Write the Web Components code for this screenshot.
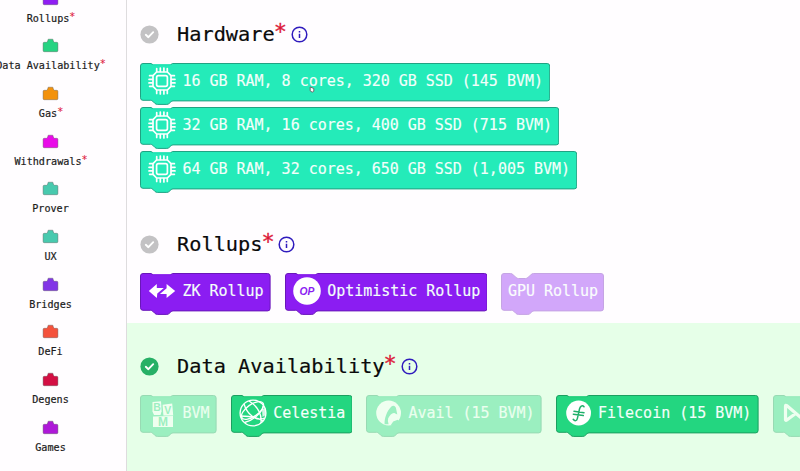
<!DOCTYPE html>
<html lang="en"><head><meta charset="utf-8"><title>Builder</title>
<style>
html,body{margin:0;height:100%;overflow:hidden;background:#fffdff;font-family:"DejaVu Sans Mono","Liberation Mono",monospace}
</style></head><body>
<bvm-app>
 <side-nav slot="nav">
  <nav-item color="#8f1df3" req>Rollups</nav-item>
  <nav-item color="#27d382" req>Data Availability</nav-item>
  <nav-item color="#f3920c" req>Gas</nav-item>
  <nav-item color="#e90be8" req>Withdrawals</nav-item>
  <nav-item color="#48c9ae">Prover</nav-item>
  <nav-item color="#48c9ae">UX</nav-item>
  <nav-item color="#8236e6">Bridges</nav-item>
  <nav-item color="#f4523c">DeFi</nav-item>
  <nav-item color="#d30f43">Degens</nav-item>
  <nav-item color="#ae18d8">Games</nav-item>
 </side-nav>
 <option-group heading="Hardware" style="height:210px" stack>
  <lego-block kind="hw" icon="chip">16 GB RAM, 8 cores, 320 GB SSD (145 BVM)</lego-block>
  <lego-block kind="hw" icon="chip">32 GB RAM, 16 cores, 400 GB SSD (715 BVM)</lego-block>
  <lego-block kind="hw" icon="chip">64 GB RAM, 32 cores, 650 GB SSD (1,005 BVM)</lego-block>
 </option-group>
 <option-group heading="Rollups" style="height:113px">
  <lego-block kind="roll" icon="zk">ZK Rollup</lego-block>
  <lego-block kind="roll" icon="op">Optimistic Rollup</lego-block>
  <lego-block kind="roll" off>GPU Rollup</lego-block>
 </option-group>
 <option-group heading="Data Availability" style="height:148px" done>
  <lego-block kind="da" icon="bvm" off>BVM</lego-block>
  <lego-block kind="da" icon="celestia">Celestia</lego-block>
  <lego-block kind="da" icon="avail" off>Avail (15 BVM)</lego-block>
  <lego-block kind="da" icon="filecoin">Filecoin (15 BVM)</lego-block>
  <lego-block kind="da" icon="near" off></lego-block>
 </option-group>
 <mouse-dot slot="over"></mouse-dot>
</bvm-app>
<script>
const make=(el,html)=>{el.attachShadow({mode:'open'}).innerHTML=html};

customElements.define('bvm-app',class extends HTMLElement{connectedCallback(){make(this,`
<style>:host{display:grid;grid-template-columns:127px 1fr;width:100%;height:471px;position:relative;overflow:hidden}
main{display:flex;flex-direction:column;min-width:0;overflow:hidden}</style>
<slot name="nav"></slot><main><slot></slot></main><slot name="over"></slot>`)}});

customElements.define('side-nav',class extends HTMLElement{connectedCallback(){make(this,`
<style>:host{display:flex;flex-direction:column;box-sizing:border-box;height:471px;border-right:1px solid #dedcde;overflow:hidden}
div{display:flex;flex-direction:column;margin-top:-9.3px;width:101px}</style><div><slot></slot></div>`)}});

customElements.define('nav-item',class extends HTMLElement{connectedCallback(){const c=this.getAttribute('color');make(this,`
<style>:host{display:flex;flex-direction:column;align-items:center;height:47.67px;flex:none;color:#1c1c1c}
svg{display:block;flex:none}
span{display:flex;margin-top:6px;font-size:10.15px;line-height:14px;white-space:pre;-webkit-text-stroke:.2px #1c1c1c}
i{font-style:normal;color:#e0213f;width:5px;position:relative;top:-2px}
i{-webkit-text-stroke:.1px #e0213f}</style>
<svg width="17" height="15"><path d="M2.2 4.3H4.6L5.8 3.1V2Q5.8 1.2 6.7 1.2H10.3Q11.2 1.2 11.2 2V3.1L12.4 4.3H14.8Q15.9 4.3 15.9 5.4V12.5Q15.9 13.7 14.8 13.7H2.2Q1.1 13.7 1.1 12.5V5.4Q1.1 4.3 2.2 4.3Z" fill="${c}" stroke="#555" stroke-opacity=".5" stroke-width=".8"/></svg>
<span><slot></slot>${this.hasAttribute('req')?'<i>*</i>':''}</span>`)}});

customElements.define('option-group',class extends HTMLElement{connectedCallback(){const done=this.hasAttribute('done');make(this,`
<style>:host{display:block;flex:none;box-sizing:border-box;padding:21px 0 0 13px;overflow:hidden;background:${done?'#e6ffe8':'transparent'}}
:host([heading="Data Availability"]){padding-top:30px}
header{display:flex;align-items:center;height:26px;color:#0a0a0a}
.check{margin-right:18px}svg{flex:none}
h2{margin:0;font-weight:400;font-size:20.3px;line-height:26px;white-space:pre;-webkit-text-stroke:.2px #0a0a0a}
b{font-weight:400;font-size:22px;line-height:26px;color:#dc1838;width:11px;position:relative;top:-2px;left:-1px;-webkit-text-stroke:.3px #dc1838}
.info{margin-left:5px}
div{display:flex;gap:14.1px;margin-top:16px;align-items:flex-start}
:host([stack]) div{flex-direction:column;gap:2px}</style>
<header><svg class="check" width="19" height="19"><circle cx="9.5" cy="9.5" r="9.1" fill="${done?'#27b066':'#c3c2c4'}"/><path d="M5.8 9.8L8.4 12.2L13.2 7.2" fill="none" stroke="#fff" stroke-width="1.9" stroke-linecap="round" stroke-linejoin="round"/></svg>
<h2>${this.getAttribute('heading')}</h2><b>*</b>
<svg class="info" width="17" height="17" fill="none" stroke="#2f1bbd" stroke-width="1.5"><circle cx="8.5" cy="8.5" r="7.3"/><path d="M8.5 7.8V12M8.5 4.9V6.4"/></svg></header>
<div><slot></slot></div>`)}});

const icons={
chip:`<g fill="none" stroke="#fff" stroke-width="1.7" stroke-linecap="round"><path d="M8.6 5H19.4L23 8.6V19.4L19.4 23H8.6L5 19.4V8.6Z"/><rect x="8.6" y="8.6" width="10.8" height="10.8" rx="1.8"/><path d="M8.7 4.5V1.6M12.3 4.5V1M15.9 4.5V1M19.3 4.5V1.6M8.7 23.5V26.4M12.3 23.5V27M15.9 23.5V27M19.3 23.5V26.4M4.5 8.7H1.6M4.5 12.3H1M4.5 15.9H1M4.5 19.3H1.6M23.5 8.7H26.4M23.5 12.3H27M23.5 15.9H27M23.5 19.3H26.4"/></g>`,
zk:`<path fill="#fff" d="M.8 14L8.8 7V11H15.8L9.3 16.6L8.8 21ZM27.2 14L18.6 7V11.3L11.9 17.1H18.6V21Z"/>`,
op:`<circle cx="14" cy="14" r="13.8" fill="#fff"/><text x="13.9" y="17.6" text-anchor="middle" font-family="Liberation Sans,sans-serif" font-size="10.3" font-weight="bold" font-style="italic" fill="#8b1df2">OP</text>`,
bvm:`<g fill="#fff"><path d="M4.5 3L13 2.2L13.6 12.2L12.5 16H6L4.5 12.5Z"/><path d="M14.6 5.8L24.2 4.6L25.2 16.4H15.4Z"/><path d="M5 17.6L25 17V29H5Z"/></g><g fill="#23d680" font-family="Liberation Sans,sans-serif" font-weight="bold" text-anchor="middle"><text x="9" y="11.6" font-size="10.5">B</text><text x="19.8" y="14.6" font-size="10.5">V</text><text x="15" y="27.2" font-size="12">M</text></g>`,
celestia:`<g fill="none" stroke="#fff" stroke-width="1.35"><circle cx="14" cy="14" r="12.9"/><ellipse cx="13.5" cy="11.5" rx="12.8" ry="6" transform="rotate(-35 13.5 11.5)"/><path d="M5 5C8 15 17 23 25.5 19M5.5 23.5C12 22 23 15 24.2 7M10 2C18 7 23 14 22 24M1.5 17C8 17 18 18 24 22"/></g><path d="M23 10L26.7 9V16L23.5 18Z" fill="#fff" opacity=".8"/>`,
avail:`<circle cx="12.6" cy="14" r="12.4" fill="#fff"/><path d="M8.6 25.2C8.3 20 10.5 12.5 15.4 7.6C17.6 5.8 20 7.5 20.2 10.2L21.3 15.5L18.8 14.2C16.2 13.4 14 16 12.2 19.3Q11.4 21.6 12.6 25.2Z" fill="#23d680"/><path d="M14.5 26.6L17.2 22.6L21.8 20.8L23.4 22.4L20.5 25.6Z" fill="#23d680"/>`,
filecoin:`<circle cx="12.6" cy="14" r="12.4" fill="#fff"/><path d="M18 7.8C16.2 5.4 14.1 7.5 13.5 10L11.4 19.3C10.8 22 8.8 22.5 7.2 20.3M8 12.3L18 13.7M7.3 15.2L17.3 16.6" fill="none" stroke="#1fb06b" stroke-width="1.5" stroke-linecap="round"/>`,
near:`<path d="M4.5 21V7Q4.5 5.7 5.7 6.6L23 21.2Q24.5 22 24.5 20.5V6M4.5 20.5Q4.5 22 5.8 21L14 15" fill="none" stroke="#fff" stroke-width="3.2"/>`};
const tone={hw:['#24ebb9','#21a283'],roll:['#8b1df2','#6917b9'],da:['#23d680','#1c9f60']};

/* A brick: notch on the top edge, stud on the bottom edge. Bricks with an icon have the notch plugged. */
customElements.define('lego-block',class extends HTMLElement{connectedCallback(){
const ic=this.getAttribute('icon'),kind=this.getAttribute('kind'),[f,s]=tone[kind],off=this.hasAttribute('off');
const narrow=ic==='avail'||ic==='filecoin';
const w=(this.textContent.length||6)*9+(ic?(kind==='hw'?50.2:49.6):13),r=w-.5;
const top=ic?'H11L13.5 2H30L32.5.5':'H9.5Q11 .5 12 1.7L15 4.4Q16 5.5 17.5 5.5H24.5Q26 5.5 27 4.4L30 1.7Q31 .5 32.5.5';
make(this,`
<style>:host{display:flex;position:relative;flex:none;width:${w}px;height:42px;box-sizing:border-box;padding:0 0 0 ${ic?8:6.5}px;${off?'opacity:.38':''}}
.bg{position:absolute;left:0;top:0}
.ic{position:relative;flex:none;width:28px;height:28px;margin:4px ${narrow?6:6.5}px 0 0}
span{position:relative;color:#f3fffb;font-size:15px;letter-spacing:-.02px;line-height:20px;margin-top:8px;white-space:pre;-webkit-text-stroke:.15px #f3fffb}</style>
<svg class="bg" width="${w}" height="42"><path d="M3 .5${top}H${r-2.5}Q${r} .5 ${r} 3V35.4Q${r} 37.9 ${r-2.5} 37.9H33Q31.8 37.9 30.8 38.9L29 40.6Q28.2 41.4 26.8 41.4H17.5Q16 41.4 15 40.5L12.7 38.2Q11.8 37.3 10.5 37.3H3Q.5 37.3 .5 34.8V3Q.5.5 3 .5Z" fill="${f}" stroke="${s}" stroke-width="1"/>${ic?`<path d="M12.5 2H31" stroke="${f}" stroke-width="1.6"/>`:''}</svg>
${ic?`<svg class="ic" viewBox="${narrow?'-2 0 28 28':'0 0 28 28'}">${icons[ic]}</svg>`:''}<span><slot></slot></span>`)}});

customElements.define('mouse-dot',class extends HTMLElement{connectedCallback(){make(this,`
<style>:host{display:block;position:absolute;left:309px;top:86px;width:6px;height:7px}svg{display:block}</style>
<svg width="6" height="7"><path d="M1.2 1L4.8 2.5V5.2L3.2 6.2L1.2 4.8Z" fill="#fff" stroke="#6b5a60" stroke-width=".9"/></svg>`)}});
</script>
</body></html>
